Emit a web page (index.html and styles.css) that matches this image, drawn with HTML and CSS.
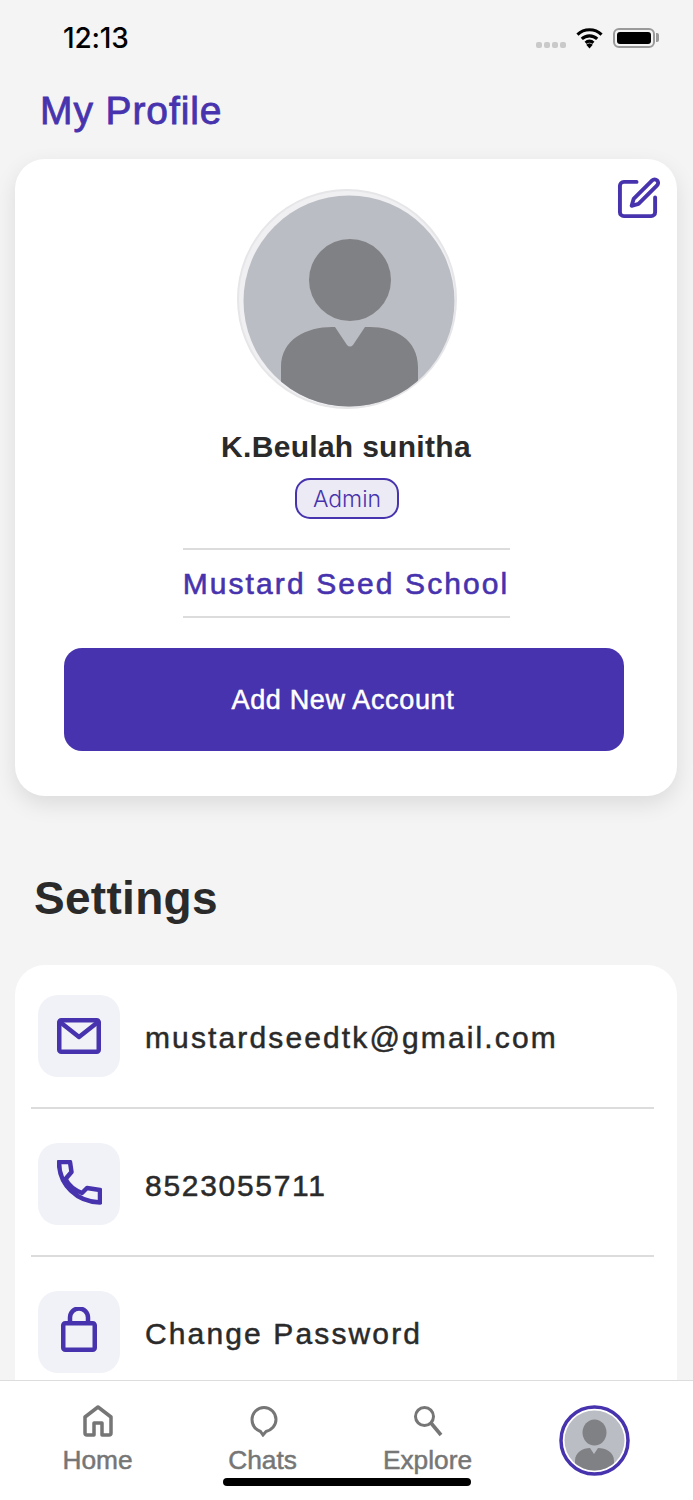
FILE: index.html
```html
<!DOCTYPE html>
<html lang="en">
<head>
  <meta charset="UTF-8">
  <meta name="viewport" content="width=device-width, initial-scale=1.0">
  <title>My Profile</title>
  <link rel="stylesheet" href="styles.css">
</head>
<body>

<div class="app">
  <div class="status-bar">
    <span class="status-time">12:13</span>
    <div class="status-icons">
      <div class="signal"><i></i><i></i><i></i><i></i></div>
      <svg class="wifi" width="27" height="22" viewBox="0 0 28 22">
        <path d="M1.500 7.500a18 18 0 0 1 25 0M6 12a11.500 11.500 0 0 1 16 0M10 16a5.500 5.500 0 0 1 8 0" fill="none" stroke="#000" stroke-width="3.200"/>
        <path d="M14 22l-3.400-4a5 5 0 0 1 6.800 0z" fill="#000"/>
      </svg>
      <div class="battery"><div class="battery-level"></div></div>
    </div>
  </div>

  <main class="content">
    <h1 class="page-title">My Profile</h1>

    <section class="profile-card">
      <svg class="edit-icon" width="43" height="43" viewBox="0 0 44 44" fill="none" stroke="#4733ad" stroke-width="4" stroke-linecap="round" stroke-linejoin="round">
        <path d="M20 5H7a4 4 0 0 0-4 4v27a4 4 0 0 0 4 4h28a4 4 0 0 0 4-4V21"/>
        <path d="M36 3.500a3.500 3.500 0 0 1 5 5L22 27.500l-7 2 2-7z"/>
      </svg>
      <svg class="avatar-big" viewBox="0 0 220 220">
        <circle cx="110" cy="110" r="109" fill="#f0f0f3" stroke="#e6e6e9" stroke-width="2"/>
        <circle cx="112" cy="112" r="105.500" fill="#bbbdc4"/>
        <clipPath id="bigClip"><circle cx="112" cy="112" r="105.500"/></clipPath>
        <g fill="#808185" clip-path="url(#bigClip)">
          <circle cx="113" cy="91" r="41"/>
          <path d="M44 220v-42c0-28 26-40 51-40h3l12 18q3 3 6 0l12-18h5c24 0 48 12 48 40v42z"/>
        </g>
      </svg>
      <h2 class="profile-name">K.Beulah sunitha</h2>
      <span class="role-badge">Admin</span>
      <div class="school-name">Mustard Seed School</div>
      <button class="add-account" type="button">Add New Account</button>
    </section>

    <h2 class="settings-title">Settings</h2>

    <section class="settings-card">
      <div class="settings-row">
        <div class="row-icon">
          <svg width="44" height="36" viewBox="0 0 44 36" fill="none" stroke="#4733ad" stroke-width="4.500" stroke-linejoin="round" stroke-linecap="round">
            <rect x="2.250" y="2.250" width="39.500" height="31.500" rx="2"/>
            <path d="M3 4l19 15L41 4"/>
          </svg>
        </div>
        <span class="row-text">mustardseedtk@gmail.com</span>
      </div>
      <div class="settings-row">
        <div class="row-icon">
          <svg class="phone-icon" width="45" height="45" viewBox="0 0 45 45" fill="none" stroke="#4733ad" stroke-width="4.500" stroke-linejoin="round">
            <path d="M2 2h11l1.500 10-6 7C12 26 17 30 25 33l5-5 13 2v12.500C20 42 2 25 2 2z"/>
          </svg>
        </div>
        <span class="row-text row-text-phone">8523055711</span>
      </div>
      <div class="settings-row">
        <div class="row-icon">
          <svg class="lock-icon" width="36" height="45" viewBox="0 0 36 45" fill="none" stroke="#4733ad" stroke-width="4.500" stroke-linejoin="round">
            <rect x="2.250" y="16.250" width="31.500" height="26.500" rx="2"/>
            <path d="M9 16V10.500a9 9 0 0 1 18 0V16"/>
          </svg>
        </div>
        <span class="row-text">Change Password</span>
      </div>
    </section>
  </main>

  <nav class="tab-bar">
    <div class="tab">
      <svg width="32" height="32" viewBox="0 0 32 32" fill="none" stroke="#767676" stroke-width="3.500" stroke-linejoin="round">
        <path d="M3 12L16 2l13 10v16a2 2 0 0 1-2 2h-7V18h-8v12H5a2 2 0 0 1-2-2z"/>
      </svg>
      <span>Home</span>
    </div>
    <div class="tab">
      <svg width="32" height="32" viewBox="0 0 32 32" fill="none" stroke="#767676" stroke-width="3">
        <path d="M17 2.500C10.500 2.500 5 8 5 14.500c0 6 3.500 10 8.500 12l2.500 3.500 3-3.500c5.500-1.500 10-6 10-12C29 8 23.500 2.500 17 2.500z"/>
      </svg>
      <span>Chats</span>
    </div>
    <div class="tab">
      <svg width="32" height="32" viewBox="0 0 32 32" fill="none" stroke="#767676" stroke-width="3">
        <circle cx="12.500" cy="11.500" r="9"/>
        <path d="M19 18l10 12" stroke-width="3.600"/>
      </svg>
      <span>Explore</span>
    </div>
    <div class="tab">
      <svg class="tab-avatar" width="71" height="71" viewBox="0 0 71 71">
        <circle cx="35.500" cy="35.500" r="33.500" fill="#fff" stroke="#4733ad" stroke-width="3.500"/>
        <circle cx="35.500" cy="35.500" r="30" fill="#bbbdc4"/>
        <clipPath id="smallClip"><circle cx="35.500" cy="35.500" r="30"/></clipPath>
        <g fill="#808185" clip-path="url(#smallClip)">
          <ellipse cx="35.500" cy="27.500" rx="12" ry="13"/>
          <path d="M16 70V56c0-9 8-13 15-13l4 6 4-6c8 0 16 4 16 13v14z"/>
        </g>
      </svg>
    </div>
  </nav>

  <div class="home-indicator"></div>
</div>

</body>
</html>
```

FILE: styles.css
```css
:root {
  --purple: #4733ad;
  --bg: #f4f4f4;
  --text: #2a2a2a;
  --line: #dcdcdc;
  --gray: #767676;
}

* {
  box-sizing: border-box;
}

body {
  margin: 0;
  font-family: "Liberation Sans", Arial, sans-serif;
  background-color: var(--bg);
  color: var(--text);
}

.app {
  position: relative;
  display: flex;
  flex-direction: column;
  width: 693px;
  height: 1500px;
  overflow: hidden;
}

.status-bar {
  display: flex;
  justify-content: space-between;
  align-items: center;
  height: 76px;
  padding: 0 38px 0 63px;
  flex-shrink: 0;
}

.status-time {
  font-size: 28px;
  font-weight: 500;
  font-family: Inter, sans-serif;
  letter-spacing: -0.2px;
  color: #000;
}

.status-icons {
  display: flex;
  align-items: center;
  gap: 10px;
}

.signal {
  display: flex;
  gap: 2px;
  margin-top: 14px;
}

.signal i {
  width: 6px;
  height: 6px;
  border-radius: 2px;
  background-color: #c9c9c9;
}

.battery {
  position: relative;
  width: 42px;
  height: 20px;
  padding: 2px;
  border: 2px solid #9a9a9a;
  border-radius: 6px;
}

.battery::after {
  content: "";
  position: absolute;
  right: -6px;
  top: 3px;
  width: 3px;
  height: 9px;
  border-radius: 0 2px 2px 0;
  background-color: #9a9a9a;
}

.battery-level {
  height: 100%;
  border-radius: 3px;
  background-color: #000;
}

.content {
  flex: 1;
  min-height: 0;
  overflow: hidden;
  padding: 0 16px 0 15px;
}

.page-title {
  margin: 11px 0 24px 25px;
  height: 48px;
  font-size: 39px;
  line-height: 48px;
  font-weight: 400;
  letter-spacing: 0.9px;
  color: var(--purple);
  -webkit-text-stroke: 0.8px var(--purple);
}

.profile-card {
  position: relative;
  display: flex;
  flex-direction: column;
  align-items: center;
  height: 637px;
  padding-top: 30px;
  background-color: #fff;
  border-radius: 30px;
  box-shadow: 0 8px 22px rgba(0, 0, 0, 0.1);
}

.edit-icon {
  position: absolute;
  top: 18px;
  right: 17px;
}

.avatar-big {
  width: 220px;
  height: 220px;
  margin-left: 2px;
  flex-shrink: 0;
}

.profile-name {
  margin: 19px 0 0;
  height: 36px;
  font-size: 30px;
  line-height: 38px;
  font-weight: 700;
  letter-spacing: 0.3px;
}

.role-badge {
  width: 104px;
  height: 41px;
  margin: 14px 0 0 2px;
  border: 2px solid var(--purple);
  border-radius: 15px;
  background-color: #eceaf5;
  color: var(--purple);
  font-family: Inter, sans-serif;
  font-size: 23px;
  font-weight: 300;
  line-height: 38px;
  text-align: center;
}

.school-name {
  width: 327px;
  height: 70px;
  margin-top: 29px;
  border-top: 2px solid var(--line);
  border-bottom: 2px solid var(--line);
  color: var(--purple);
  font-size: 30px;
  line-height: 67px;
  letter-spacing: 2.1px;
  text-align: center;
  white-space: nowrap;
  -webkit-text-stroke: 0.6px var(--purple);
}

.add-account {
  width: 560px;
  height: 103px;
  margin: 30px 0 0 -4px;
  padding: 1px 2px 0 0;
  border: none;
  border-radius: 18px;
  background-color: var(--purple);
  color: #fff;
  font-family: inherit;
  font-size: 27px;
  letter-spacing: 0.65px;
  -webkit-text-stroke: 0.5px #fff;
}

.settings-title {
  margin: 75px 0 40px 19px;
  height: 54px;
  font-size: 46px;
  line-height: 54px;
  font-weight: 700;
  letter-spacing: 0.3px;
}

.settings-card {
  height: 500px;
  padding: 30px 23px 0 16px;
  background-color: #fff;
  border-radius: 30px 30px 0 0;
}

.settings-row {
  display: flex;
  align-items: center;
  gap: 25px;
  height: 114px;
  margin-bottom: 34px;
  padding: 0 0 30px 7px;
  border-bottom: 2px solid var(--line);
}

.row-icon {
  display: flex;
  align-items: center;
  justify-content: center;
  width: 82px;
  height: 82px;
  border-radius: 20px;
  background-color: #f1f2f7;
  flex-shrink: 0;
}

.phone-icon {
  margin-bottom: 3px;
}

.lock-icon {
  margin-bottom: 5px;
}

.row-text {
  margin-top: 4px;
  font-size: 30px;
  line-height: 84px;
  letter-spacing: 2.13px;
  color: var(--text);
  -webkit-text-stroke: 0.5px var(--text);
}

.row-text-phone {
  letter-spacing: 1.7px;
}

.tab-bar {
  display: grid;
  grid-template-columns: repeat(4, 165px);
  justify-content: start;
  height: 120px;
  flex-shrink: 0;
  padding-left: 15px;
  background-color: #fff;
  border-top: 1px solid #ddd;
}

.tab {
  display: flex;
  flex-direction: column;
  align-items: center;
  padding-top: 24px;
  color: var(--gray);
  font-size: 26.300px;
  line-height: 32px;
  -webkit-text-stroke: 0.5px var(--gray);
}

.tab span {
  margin-top: 7px;
}

.tab-avatar {
  margin-left: 4px;
}

.home-indicator {
  position: absolute;
  left: 223px;
  bottom: 14px;
  width: 248px;
  height: 8px;
  border-radius: 4px;
  background-color: #000;
}
```
